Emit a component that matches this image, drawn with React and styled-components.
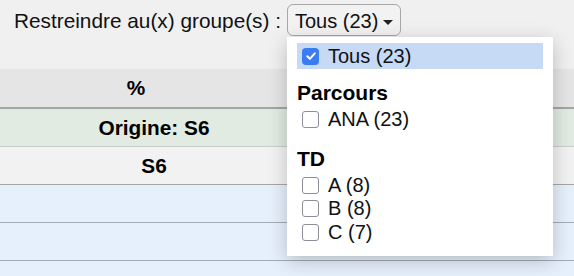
import React from "react";
import styled, { createGlobalStyle } from "styled-components";

const Global = createGlobalStyle`
  html, body { margin: 0; padding: 0; }
  body {
    background: #f0f0f0;
    font-family: "Liberation Sans", Arial, Helvetica, sans-serif;
    color: #111;
    width: 574px;
    height: 276px;
    overflow: hidden;
  }
`;

const Page = styled.div`
  position: relative;
  width: 574px;
  height: 276px;
  display: flex;
  flex-direction: column;
`;

const Toolbar = styled.div`
  height: 69px;
  flex: none;
  box-sizing: border-box;
  padding: 4px 0 0 14px;
  display: flex;
  align-items: baseline;
  gap: 6px;
`;

const Label = styled.span`
  font-size: 20.8px;
  line-height: 24px;
`;

const SelectWrap = styled.div`
  position: relative;
`;

const SelectButton = styled.button`
  display: inline-flex;
  align-items: center;
  box-sizing: border-box;
  height: 32px;
  width: 114px;
  padding: 3px 5px 1px 7px;
  border: 1px solid #a8a8a8;
  border-radius: 6px;
  background: #f2f2f2;
  font-family: inherit;
  font-size: 20px;
  line-height: 26px;
  color: #111;
`;

const Caret = styled.span`
  width: 0;
  height: 0;
  margin-left: 5px;
  margin-top: 2px;
  border-left: 5px solid transparent;
  border-right: 5px solid transparent;
  border-top: 5px solid #222;
`;

const Menu = styled.div`
  position: absolute;
  top: 33px;
  left: 0;
  width: 266px;
  box-sizing: border-box;
  padding: 6px 10px 12px;
  background: #fff;
  box-shadow: 0 5px 18px rgba(0, 0, 0, 0.22);
  z-index: 10;
`;

const Option = styled.div`
  display: flex;
  align-items: center;
  gap: 9px;
  padding-left: 5px;
  font-size: 20px;
  height: ${(p) => (p.$first ? "26px" : "23.5px")};
  background: ${(p) => (p.$selected ? "#c6daf6" : "transparent")};
  color: #111;
`;

const Box = styled.span`
  width: 17px;
  height: 17px;
  box-sizing: border-box;
  border-radius: ${(p) => (p.$checked ? "4px" : "3px")};
  border: ${(p) => (p.$checked ? "none" : "1.5px solid #8e8e98")};
  background: ${(p) => (p.$checked ? "#3a7cf1" : "#fff")};
  display: inline-flex;
  align-items: center;
  justify-content: center;
  flex: none;
`;

const GroupTitle = styled.div`
  font-weight: bold;
  font-size: 21px;
  line-height: 24px;
  margin-top: ${(p) => p.$top}px;
  margin-bottom: 3px;
  color: #000;
`;

const Table = styled.div`
  width: 574px;
  flex: 1;
  background: #e6f0fc;
`;

const Row = styled.div`
  display: flex;
  height: ${(p) => p.$h || 37}px;
  background: ${(p) => p.$bg};
  border-bottom: ${(p) => p.$border};
`;

const Cell = styled.div`
  width: ${(p) => p.$w}px;
  flex: none;
  display: flex;
  align-items: center;
  justify-content: center;
  font-weight: bold;
  font-size: 20.8px;
  color: #000;
`;

const Check = ({ checked }) => (
  <Box $checked={checked}>
    {checked && (
      <svg width="12" height="12" viewBox="0 0 12 12">
        <path
          d="M2.3 6.3 L4.9 8.8 L9.8 3.3"
          fill="none"
          stroke="#fff"
          strokeWidth="2"
          strokeLinecap="round"
          strokeLinejoin="round"
        />
      </svg>
    )}
  </Box>
);

const groups = [
  { title: "Parcours", top: 12, items: ["ANA (23)"] },
  { title: "TD", top: 15, items: ["A (8)", "B (8)", "C (7)"] },
];

export default function App() {
  return (
    <Page>
      <Global />
      <Toolbar>
        <Label>Restreindre au(x) groupe(s) :</Label>
        <SelectWrap>
          <SelectButton>
            Tous (23)
            <Caret />
          </SelectButton>
          <Menu>
            <Option $selected $first>
              <Check checked />
              Tous (23)
            </Option>
            {groups.map((g) => (
              <div key={g.title}>
                <GroupTitle $top={g.top}>{g.title}</GroupTitle>
                {g.items.map((it) => (
                  <Option key={it}>
                    <Check />
                    {it}
                  </Option>
                ))}
              </div>
            ))}
          </Menu>
        </SelectWrap>
      </Toolbar>
      <Table>
        <Row $h={38} $bg="#e5e5e5" $border="2px solid #a5a5a5">
          <Cell $w={272}>%</Cell>
        </Row>
        <Row $bg="#e1ebe1" $border="1px solid #cccccc">
          <Cell $w={308}>Origine: S6</Cell>
        </Row>
        <Row $bg="#f2f2f2" $border="1px solid #a6a6a6">
          <Cell $w={308}>S6</Cell>
        </Row>
        <Row $bg="#e6f0fc" $border="1px solid #a3abb4" />
        <Row $bg="#e6f0fc" $border="1px solid #a3abb4" />
      </Table>
    </Page>
  );
}
